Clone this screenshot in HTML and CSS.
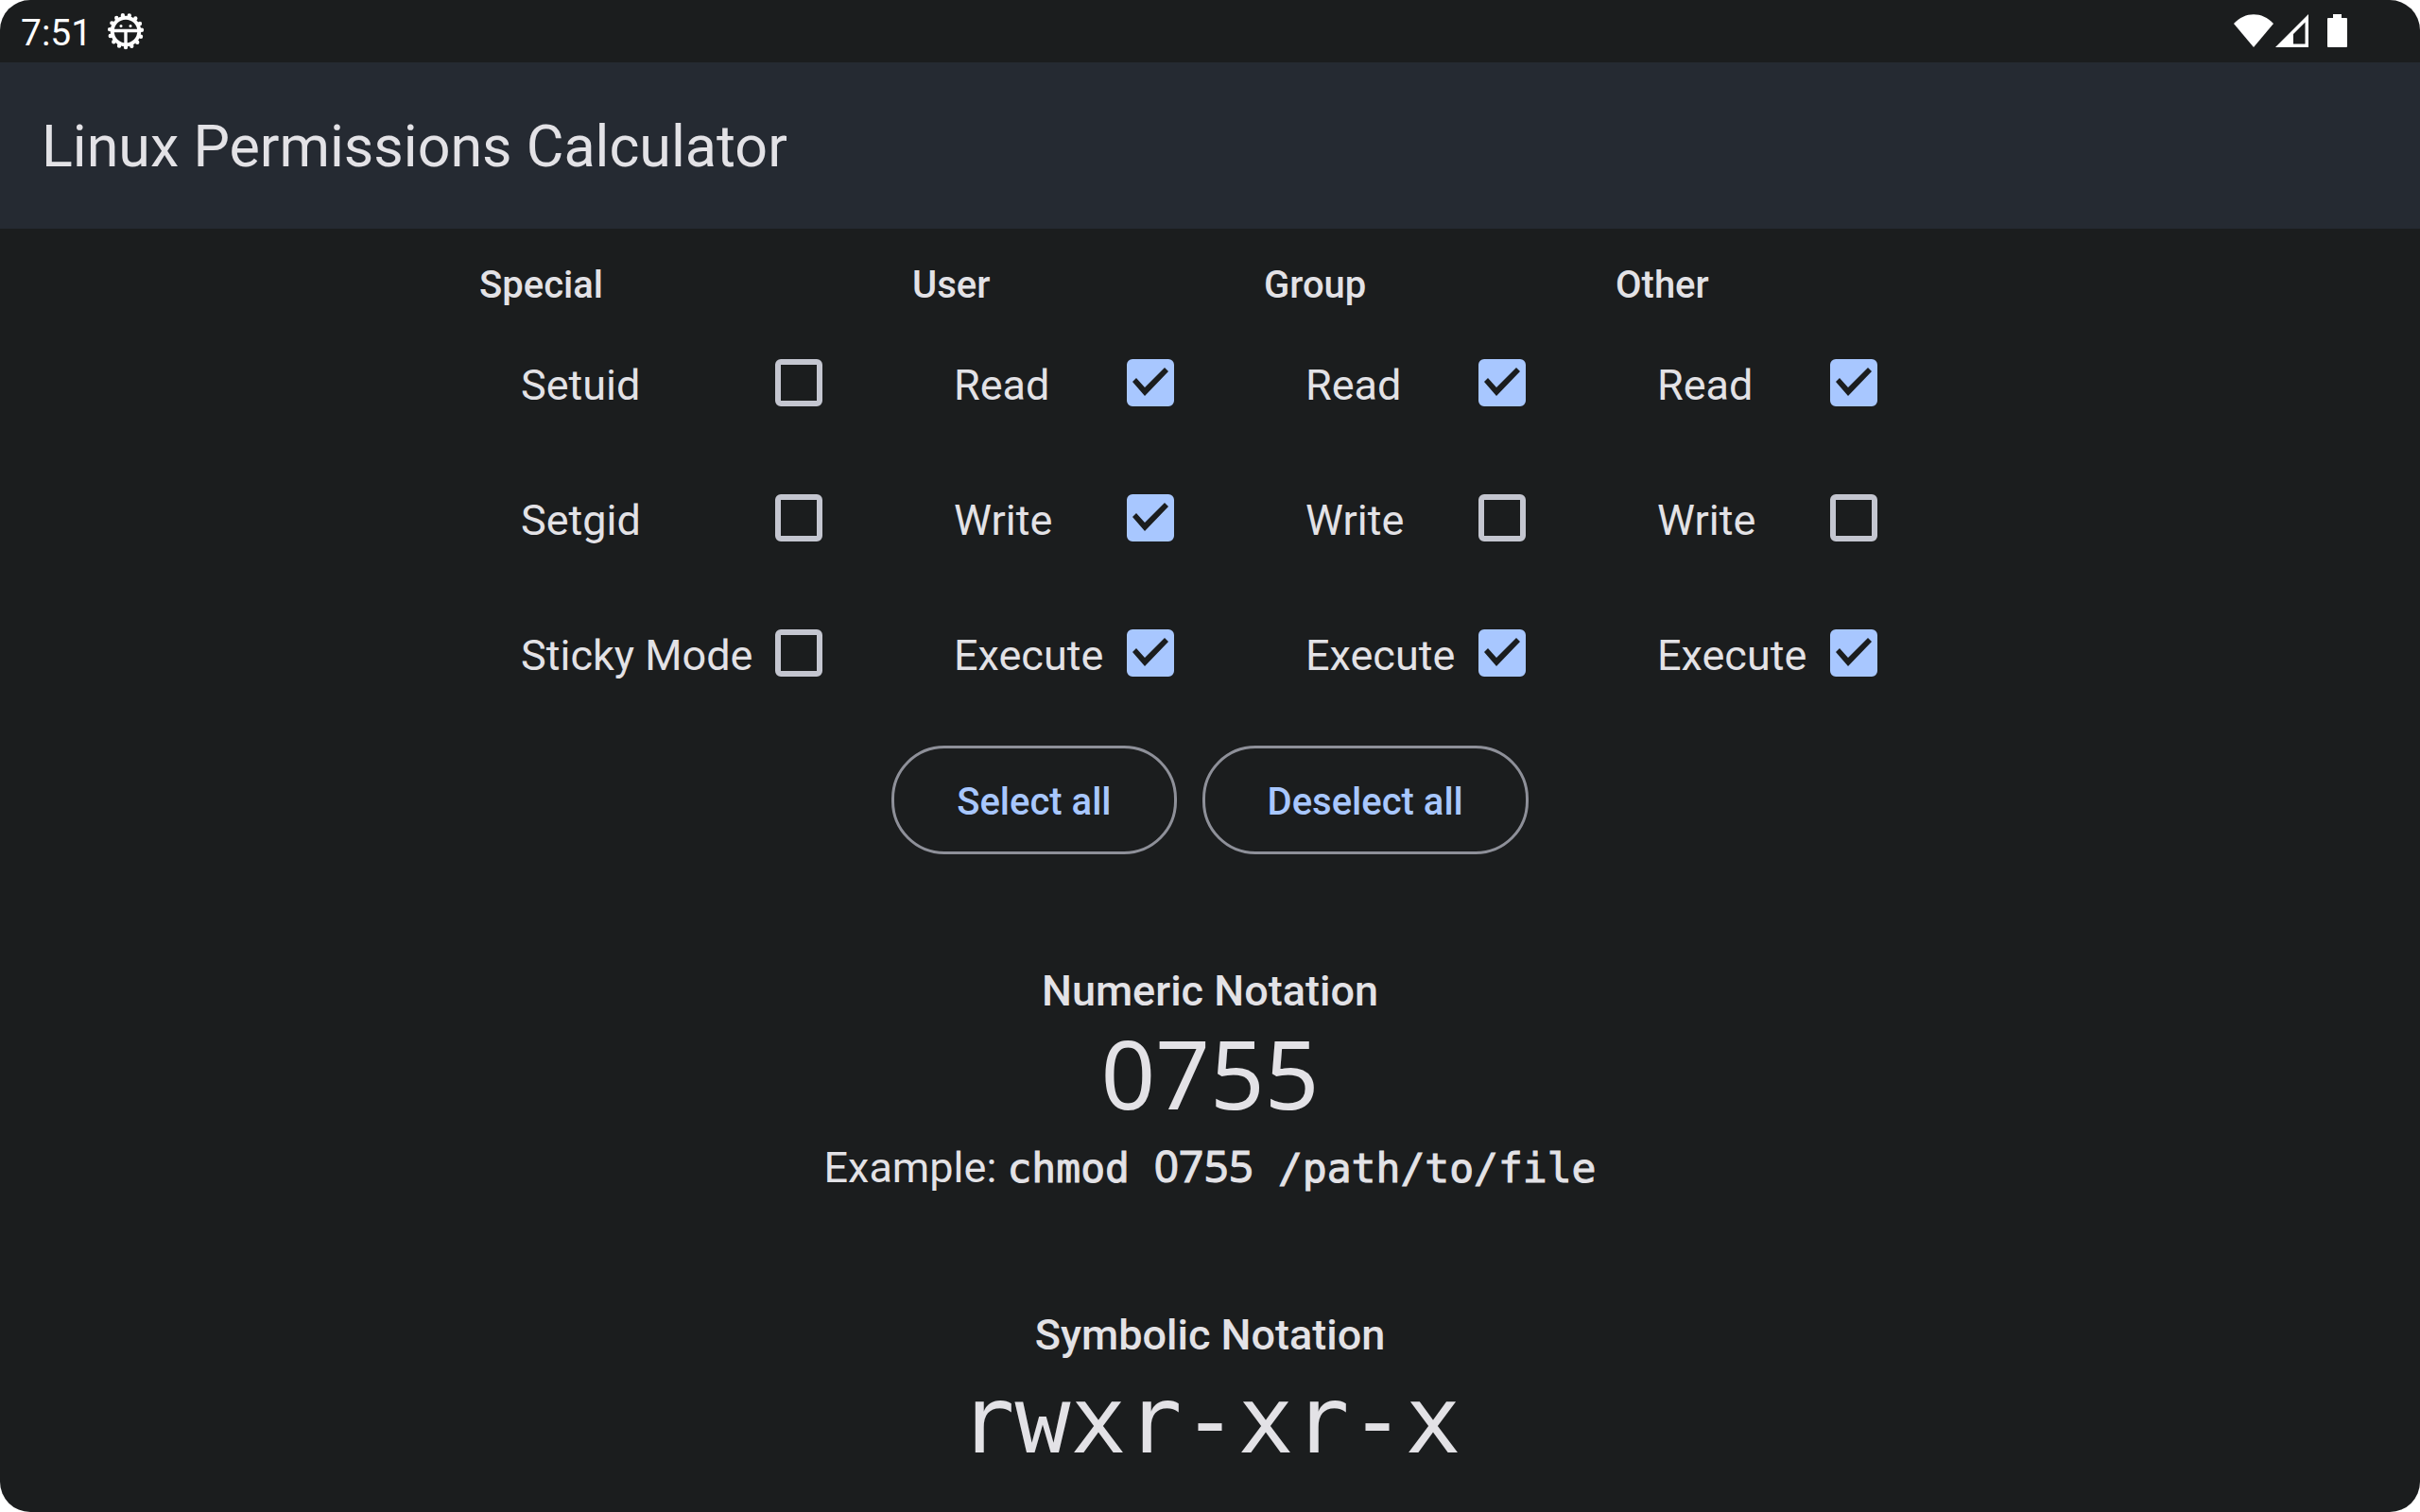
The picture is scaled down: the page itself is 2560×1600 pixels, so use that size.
FILE: index.html
```html
<!DOCTYPE html>
<html lang="en">
<head>
<meta charset="utf-8">
<meta name="viewport" content="width=device-width, initial-scale=1">
<title>Linux Permissions Calculator</title>
<link rel="stylesheet" href="styles.css">
</head>
<body>
<div class="screen">
  <div class="status-bar">
    <span class="clock">7:51</span>
    <svg class="status-gear" viewBox="0 0 40 40" aria-hidden="true">
      <circle cx="20" cy="20" r="14.300" fill="none" stroke="#fff" stroke-width="4"/>
      <circle cx="20" cy="20" r="17" fill="none" stroke="#fff" stroke-width="4.400" stroke-linecap="round" stroke-dasharray="0 7.121" transform="rotate(90 20 20)"/>
      <path d="M7 19.500H33M20 20V34" stroke="#fff" stroke-width="3.400" fill="none"/>
      <circle cx="15" cy="14.500" r="1.500" fill="#fff"/><circle cx="25" cy="14.500" r="1.500" fill="#fff"/>
    </svg>
    <div class="status-icons">
      <svg class="icon-wifi" viewBox="0 0 42 36" aria-hidden="true"><path d="M21 35L0 10C12 -3 30 -3 42 10Z" fill="#fff"/></svg>
      <svg class="icon-signal" viewBox="0 0 36 36" aria-hidden="true"><path fill-rule="evenodd" d="M0 35L35 0V35ZM19 21V31.500H31.500V8.500Z" fill="#fff"/></svg>
      <svg class="icon-battery" viewBox="0 0 22 36" aria-hidden="true"><path d="M6 0h9v4h5q1 0 1 1v29q0 1-1 1H1q-1 0-1-1V5q0-1 1-1h5z" fill="#fff"/></svg>
    </div>
  </div>
  <header class="app-bar"><h1 class="app-title">Linux Permissions Calculator</h1></header>
  <main class="content">
    <form class="calculator">
      <div class="groups">
        <fieldset class="group">
          <legend class="group-title">Special</legend>
          <label class="option">Setuid<input class="check" type="checkbox"></label>
          <label class="option">Setgid<input class="check" type="checkbox"></label>
          <label class="option">Sticky Mode<input class="check" type="checkbox"></label>
        </fieldset>
        <fieldset class="group">
          <legend class="group-title">User</legend>
          <label class="option">Read<input class="check" type="checkbox" checked></label>
          <label class="option">Write<input class="check" type="checkbox" checked></label>
          <label class="option">Execute<input class="check" type="checkbox" checked></label>
        </fieldset>
        <fieldset class="group">
          <legend class="group-title">Group</legend>
          <label class="option">Read<input class="check" type="checkbox" checked></label>
          <label class="option">Write<input class="check" type="checkbox"></label>
          <label class="option">Execute<input class="check" type="checkbox" checked></label>
        </fieldset>
        <fieldset class="group">
          <legend class="group-title">Other</legend>
          <label class="option">Read<input class="check" type="checkbox" checked></label>
          <label class="option">Write<input class="check" type="checkbox"></label>
          <label class="option">Execute<input class="check" type="checkbox" checked></label>
        </fieldset>
      </div>
      <div class="actions">
        <button class="button" type="button">Select all</button>
        <button class="button" type="button">Deselect all</button>
      </div>
    </form>
    <section class="notation">
      <h2 class="notation-title">Numeric Notation</h2>
      <output class="notation-value notation-digits">0755</output>
      <p class="example">Example: <code class="command">chmod <span class="command-digits">0755</span> /path/to/file</code></p>
    </section>
    <section class="notation">
      <h2 class="notation-title">Symbolic Notation</h2>
      <output class="notation-value">rwxr-xr-x</output>
    </section>
  </main>
</div>
</body>
</html>
```
FILE: styles.css
```css
* {
  box-sizing: border-box;
}

body {
  margin: 0;
  background: #fff;
  color: #e3e2e6;
  font-family: Roboto, "Liberation Sans", sans-serif;
}

.screen {
  min-height: 100vh;
  overflow: hidden;
  border-radius: 32px;
  background: #1b1d1e;
}

/* System status bar */
.status-bar {
  display: flex;
  align-items: center;
  height: 66px;
  padding: 0 76px 0 22px;
  color: #fff;
}

.clock {
  padding-top: 3px;
  font-size: 39px;
  line-height: 68px;
}

.status-gear {
  width: 40px;
  height: 40px;
  margin-left: 16px;
}

.status-icons {
  display: flex;
  height: 36px;
  margin-left: auto;
}

.icon-wifi {
  width: 42px;
}

.icon-signal {
  width: 36px;
  margin: 0 19px 0 2px;
}

.icon-battery {
  width: 22px;
}

.app-bar {
  padding: 49px 44px 47px;
  background: #252a32;
}

.app-title {
  margin: 0;
  font-size: 61px;
  font-weight: 400;
  line-height: 80px;
}

/* Permission check boxes */
.content {
  padding-top: 32px;
}

.groups {
  display: grid;
  grid-template-columns: 432px repeat(3, 346px);
  justify-content: center;
  column-gap: 26px;
}

.group {
  min-width: 0;
  margin: 0;
  padding: 0 68px 0 1px;
  border: 0;
}

.group-title {
  padding: 0;
  font-size: 40px;
  font-weight: 500;
  line-height: 56px;
}

.option {
  display: flex;
  align-items: center;
  justify-content: space-between;
  height: 143px;
  padding: 4px 0 0 44px;
  font-size: 45px;
  white-space: nowrap;
}

.group-title + .option {
  margin-top: 4px;
}

.check {
  appearance: none;
  display: grid;
  flex: none;
  width: 50px;
  height: 50px;
  margin: 0 0 5px;
  border: 6px solid #c4c6d0;
  border-radius: 6px;
}

.check:checked {
  border-color: #a8c7ff;
  background: #a8c7ff;
}

.check:checked::before {
  content: "";
  background: #1b1d1e;
  clip-path: polygon(0 18px, 4px 14px, 13px 24px, 34px 3px, 38px 7px, 13px 33px);
}

/* Buttons */
.actions {
  display: flex;
  justify-content: center;
  gap: 27px;
  margin-top: 26px;
}

.button {
  height: 115px;
  padding: 4px 66px 0;
  border: 3px solid #8e9099;
  border-radius: 56px;
  background: none;
  color: #a8c7ff;
  font: 500 40px Roboto, sans-serif;
}

/* Results */
.notation {
  display: flex;
  flex-direction: column;
  align-items: center;
  margin-top: 113px;
}

.notation-title {
  margin: 0 0 2px;
  font-size: 45px;
  font-weight: 500;
  line-height: 64px;
}

.notation-value {
  font-family: "DejaVu Sans Mono", monospace;
  font-size: 98px;
  line-height: 112px;
}

.notation-digits {
  font-family: "Noto Sans", sans-serif;
  font-size: 101px;
  line-height: 104px;
}

.example {
  margin: 14px 0 0;
  font-size: 45px;
  line-height: 64px;
}

.command {
  font-family: "DejaVu Sans Mono", monospace;
  font-size: 43px;
  -webkit-text-stroke: 1px;
}

.command-digits {
  font-family: "Noto Sans", sans-serif;
  font-size: 46px;
}
```
